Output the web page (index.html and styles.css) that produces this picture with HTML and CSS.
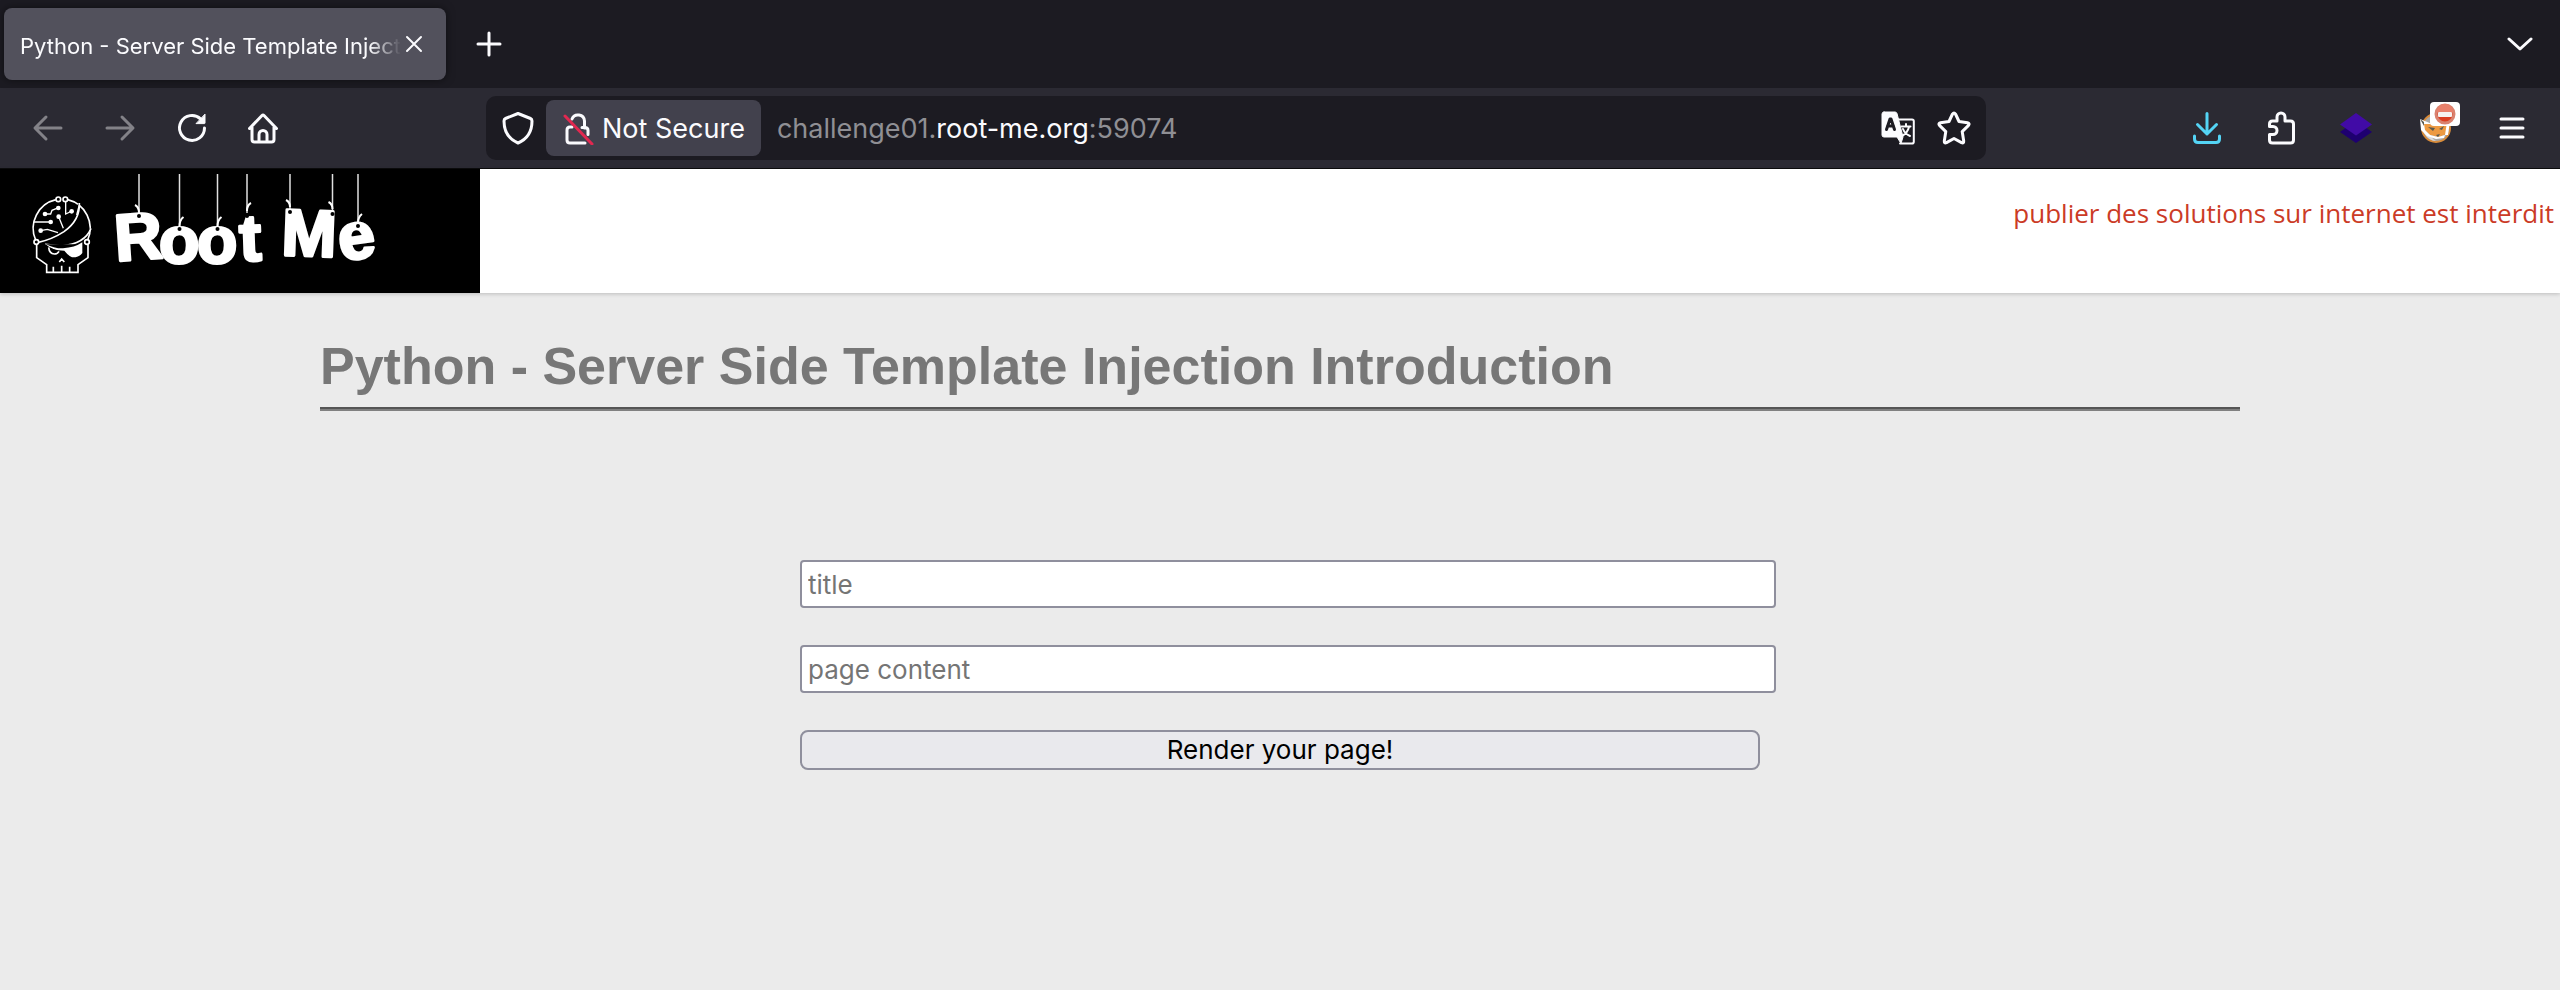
FILE: index.html
```html
<!DOCTYPE html>
<html lang="en">
<head>
<meta charset="utf-8">
<title>Python - Server Side Template Injection Introduction</title>
<link rel="stylesheet" href="styles.css">
</head>
<body>
<div class="tabstrip">
  <div class="tab">
    <span class="tab-label">Python - Server Side Template Injection Introduction</span>
    <button class="tab-close" aria-label="Close tab"><svg width="18" height="18" viewBox="0 0 18 18"><path d="M2 2l14 14M16 2L2 16"/></svg></button>
  </div>
  <button class="icon-button new-tab" aria-label="New tab"><svg width="26" height="26" viewBox="0 0 26 26"><path d="M13 2v22M2 13h22"/></svg></button>
  <button class="icon-button all-tabs" aria-label="List all tabs"><svg width="26" height="16" viewBox="0 0 26 16"><path d="M2 3l11 10L24 3"/></svg></button>
</div>

<div class="toolbar">
  <nav class="nav-buttons" aria-label="Navigation">
    <button class="icon-button" aria-label="Back" disabled><svg width="32" height="32" viewBox="0 0 32 32"><path d="M29 16H4M14 5L3 16l11 11"/></svg></button>
    <button class="icon-button" aria-label="Forward" disabled><svg width="32" height="32" viewBox="0 0 32 32"><path d="M3 16h25M18 5l11 11-11 11"/></svg></button>
    <button class="icon-button" aria-label="Reload"><svg width="32" height="32" viewBox="0 0 32 32"><path d="M28.500 16a12.500 12.500 0 1 1-4-9.200"/><path class="solid" d="M29 2.500v8.500a.6.6 0 0 1-.6.600h-8z"/></svg></button>
    <button class="icon-button" aria-label="Home"><svg width="32" height="32" viewBox="0 0 32 32"><path d="M1.500 16.500L14 3.500q1-1 2 0l12.500 13M4 15v12.500q0 2.500 2.500 2.500h17q2.500 0 2.500-2.500V15M11 30V22.500a4 4 0 0 1 8 0V30"/></svg></button>
  </nav>

  <div class="urlbar">
    <button class="shield" aria-label="Tracking protection"><svg width="32" height="34" viewBox="0 0 32 34"><path d="M16 2.500L28.500 7.500q1.500.6 1.500 2.500Q30 26 16 32 2 26 2 10q0-1.900 1.500-2.500z"/></svg></button>
    <button class="identity">
      <svg width="32" height="34" viewBox="0 0 32 34"><path d="M10 8a6.500 6.500 0 0 1 12.500 2v7M10 16h-2q-3 0-3 3v10q0 3 3 3h15M20 16.500h3q3 0 3 3v4"/><path class="slash" d="M3 5l27 28"/></svg>
      <span>Not Secure</span>
    </button>
    <div class="address" role="textbox" contenteditable="true" spellcheck="false" aria-label="Address">challenge01.<span class="domain">root-me.org</span>:59074</div>
    <button class="page-action" aria-label="Translate page"><svg width="34" height="34" viewBox="0 0 34 34"><path class="solid" d="M3 1h11q1.500 0 2 1.500L22 26l-2 6.500L16 26H3q-2 0-2-2V3q0-2 2-2z"/><path class="thin" d="M17 8.500h14q1.800 0 1.800 1.800v20.400q0 1.800-1.800 1.800H19"/><path class="letter" d="M5.500 18.500L9 8h1l3.500 10.500M6.500 15h6"/><path class="glyph" d="M20.500 15.500h9M25 13v2.500M28 16q-1.500 6-7 9M22 18q2 5 7 7"/></svg></button>
    <button class="page-action" aria-label="Bookmark this page"><svg width="34" height="34" viewBox="0 0 34 34"><path d="M15.500 3q1.500-2.200 3 0l3.500 7.500 8.500 1.200q2.600.6 1 2.700l-6.300 6.200 1.500 9.400q.2 2.600-2.200 1.600L17 27.500l-7.500 4.100q-2.400 1-2.200-1.600l1.500-9.400-6.300-6.200q-1.600-2.100 1-2.700l8.500-1.200z"/></svg></button>
  </div>

  <div class="extensions">
    <button class="icon-button" aria-label="Downloads"><svg class="download" width="32" height="34" viewBox="0 0 32 34"><path d="M17 2.500V23M7.500 13.500L17 23l9.500-9.500M4.500 25v3q0 3.500 3.500 3.500h18q3.500 0 3.500-3.500v-3"/></svg></button>
    <button class="icon-button" aria-label="Extensions"><svg width="32" height="34" viewBox="0 0 32 34"><path d="M4.500 15.500V13q0-3 3-3H12V6a4 4 0 0 1 8 0v4h5.500q3 0 3 3v16q0 3-3 3h-18q-3 0-3-3v-5.500H8a4 4 0 0 0 0-8z"/></svg></button>
    <button class="icon-button" aria-label="Layers extension"><svg width="34" height="34" viewBox="0 0 34 34"><path class="layer-back" d="M17 9.500L33 21 17 32 1 21z"/><path class="layer-front" d="M17 2l16 11.500L17 24.500 1 13.500z"/></svg></button>
    <button class="icon-button proxy" aria-label="FoxyProxy, disabled">
      <svg class="fox" width="34" height="34" viewBox="0 0 34 34"><circle cx="17" cy="17" r="14" fill="#a9a9a9" stroke="#d98c3b" stroke-width="2"/><path d="M5 22q5 8 12 8-5-3-6-7z" fill="#dcdcdc"/><path d="M3 11l11 3 9-3 7-1-2 13-8 3-9-2-5-5z" fill="#ed9a42"/><path d="M1 8l12 5-8 0 1 6 5 5 8 2 7-2-1 3-8 1-9-3-6-6zM28 11l3-1-2 14-3 0z" fill="#fff"/><path d="M1 8l4 3 0 4zM9 16l7 1-2 3zM20 18l5-3-2 4zM17 24l4-1-2 3z" fill="#5c5a50"/></svg>
      <svg class="badge" width="30" height="24" viewBox="0 0 30 24"><rect width="30" height="24" rx="4" fill="#fff"/><circle cx="15" cy="12" r="9" fill="#da3d21" stroke="#d9826f"/><path d="M7 10a8 8 0 0 1 16 0z" fill="#e9806b"/><rect x="8" y="10" width="14" height="5" rx="1" fill="#f6f1ef"/></svg>
    </button>
    <button class="icon-button menu" aria-label="Open application menu"><svg width="26" height="22" viewBox="0 0 26 22"><path d="M2 2h22M2 11h22M2 20h22"/></svg></button>
  </div>
</div>

<header class="site-header">
  <a class="logo" href="#" aria-label="Root Me">
    <svg width="480" height="124" viewBox="0 0 480 124">
      <g class="skull" transform="translate(20 -4) scale(.3333)">
        <path d="M108 104A88 88 0 0 0 47 225M143 104a88 88 0 0 1 60 121"/>
        <path d="M178 114Q181 165 132 200 95 224 55 232M213 190Q195 236 125 243 98 240 75 238"/>
        <path d="M50 238v40l30 21v23h94v-23l30-21v-40M100 322v-17M125 322v-20M149 322v-17M118 291l7-9 8 9"/>
        <path class="trace" d="M74 147h18l4-11 18-7M42 171h48M62 197l20-4 32 10M116 155l14 35M137 110v37l19-9M178 120l-8 30"/>
        <circle cx="115" cy="103" r="7"/><circle cx="136" cy="103" r="7"/><circle cx="49" cy="231" r="7"/><circle cx="201" cy="231" r="7"/>
        <g class="node"><circle cx="75" cy="147" r="7"/><circle cx="115" cy="129" r="7"/><circle cx="92" cy="171" r="7"/><circle cx="62" cy="197" r="7"/><circle cx="116" cy="155" r="7"/><circle cx="155" cy="139" r="7"/></g>
        <path class="node" d="M75 236q30 15 54 14 35-2 58-18v32q-10 14-31 13-12-6-23-20-20 0-32-4-12-5-26-17z"/>
        <path d="M86 247q2 19 17 20 10 0 14-8"/>
      </g>
      <g class="strings">
        <path d="M139 5v41M179.500 5v52M217.500 5v52M247 5v39M290 5v36M332.500 5v38M358 5v52"/>
        <path class="knot" d="M139 44q0-6-4-8M179.500 57q0-6 4-9M217.500 57q0-6 4-9M247 42q0-6 4-8M290 38q0-5-4-7M332.500 40q0-5-4-7M358 54q0-6 4-9"/>
      </g>
      <g class="letters">
        <text x="116" y="92" transform="rotate(-4 116 92)">R</text>
        <text x="159" y="94">o</text>
        <text x="197" y="94">o</text>
        <text x="240" y="92" transform="rotate(-2 240 92)">t</text>
        <text x="281" y="86" transform="rotate(2 281 86)">M</text>
        <text x="341" y="92" transform="rotate(-8 341 92)">e</text>
      </g>
      <g class="holes"><circle cx="139" cy="47" r="2"/><circle cx="179.500" cy="60" r="2"/><circle cx="217.500" cy="60" r="2"/><circle cx="247" cy="47" r="2"/><circle cx="290" cy="43" r="2"/><circle cx="332.500" cy="45" r="2"/><circle cx="358" cy="57" r="2"/></g>
    </svg>
  </a>
  <p class="notice">publier des solutions sur internet est interdit</p>
</header>

<main class="content">
  <h1>Python - Server Side Template Injection Introduction</h1>
  <hr>
  <form class="page-form">
    <input type="text" name="title" placeholder="title" aria-label="title">
    <input type="text" name="content" placeholder="page content" aria-label="page content">
    <button type="submit">Render your page!</button>
  </form>
</main>
</body>
</html>
```
FILE: styles.css
```css
body {
  margin: 0;
  min-height: 100vh;
  background: #ebebeb;
  font-family: Inter, "Liberation Sans", sans-serif;
}

button {
  font-family: inherit;
  cursor: pointer;
}

/* Browser chrome */
.tabstrip,
.toolbar {
  display: flex;
  align-items: center;
  box-sizing: border-box;
  color: #fbfbfe;
}

.tabstrip svg,
.toolbar svg {
  display: block;
  flex: none;
  fill: none;
  stroke: currentColor;
  stroke-width: 3;
  stroke-linecap: round;
  stroke-linejoin: round;
}

.tabstrip {
  height: 88px;
  padding: 0 20px 0 4px;
  background: #1c1b22;
}

.tab {
  display: flex;
  align-items: center;
  box-sizing: border-box;
  width: 442px;
  height: 72px;
  padding: 0 16px;
  border-radius: 8px;
  background: #52515c;
  box-shadow: 0 0 8px rgba(0, 0, 0, 0.5);
}

.tab-label {
  flex: 1;
  overflow: hidden;
  padding-top: 3px;
  white-space: nowrap;
  font-size: 22px;
  line-height: 32px;
  -webkit-mask-image: linear-gradient(to left, transparent, #000 32px);
  mask-image: linear-gradient(to left, transparent, #000 32px);
}

.tab-close {
  padding: 0 7px 0 4px;
  border: 0;
  background: none;
  color: inherit;
}

.tabstrip .tab-close svg {
  stroke-width: 2;
}

.icon-button {
  display: flex;
  align-items: center;
  justify-content: center;
  width: 64px;
  height: 64px;
  padding: 0;
  border: 0;
  border-radius: 8px;
  background: none;
  color: inherit;
}

.icon-button:disabled {
  color: #838288;
}

.new-tab {
  margin-left: 11px;
}

.all-tabs {
  width: 40px;
  margin-left: auto;
}

.toolbar {
  height: 81px;
  padding: 0 20px 0 16px;
  border-bottom: 1px solid #0c0c0d;
  background: #2b2a33;
}

.nav-buttons {
  display: flex;
  gap: 8px;
}

.urlbar {
  display: flex;
  flex: 1;
  align-items: center;
  height: 64px;
  margin: 0 188px 0 190px;
  border-radius: 10px;
  background: #1c1b22;
  font-size: 27px;
}

.urlbar button {
  display: flex;
  align-items: center;
  padding: 0;
  border: 0;
  background: none;
  color: inherit;
  font-size: inherit;
}

.urlbar .shield {
  padding: 0 12px 0 16px;
}

.urlbar .identity {
  gap: 8px;
  height: 56px;
  padding: 0 16px;
  border-radius: 8px;
  background: #42414d;
}

.toolbar .slash {
  stroke: #e22850;
}

.address {
  flex: 1;
  margin-left: 16px;
  outline: 0;
  color: #8f8f94;
}

.domain {
  color: #fbfbfe;
}

.urlbar .page-action {
  margin-right: 22px;
}

.urlbar .page-action:last-child {
  margin-right: 15px;
}

.toolbar .solid {
  fill: currentColor;
  stroke-width: 1;
}

.toolbar .thin,
.toolbar .glyph {
  stroke-width: 2;
}

.toolbar .letter {
  stroke: #1c1b22;
}

.extensions {
  display: flex;
  gap: 11px;
}

.download {
  color: #54d4f5;
}

.toolbar .layer-back {
  fill: #1e0070;
  stroke: none;
}

.toolbar .layer-front {
  fill: #410ba6;
  stroke: none;
}

.proxy {
  position: relative;
  width: 74px;
}

.toolbar .fox,
.toolbar .badge {
  stroke: none;
}

.badge {
  position: absolute;
  top: 6px;
  right: 13px;
}

.menu {
  width: 56px;
}

/* Site header */
.site-header {
  display: flex;
  justify-content: space-between;
  align-items: flex-start;
  background: #fff;
  box-shadow: 0 1px 4px rgba(0, 0, 0, 0.2);
}

.logo {
  display: block;
  background: #000;
}

.logo svg {
  display: block;
}

.skull {
  fill: #000;
  stroke: #fff;
  stroke-width: 5;
}

.skull .trace {
  fill: none;
  stroke-width: 4;
}

.skull .node {
  fill: #fff;
  stroke: none;
}

.strings {
  fill: none;
  stroke: #e0e0e0;
  stroke-width: 1.5;
}

.knot {
  stroke: #fff;
  stroke-width: 2;
}

.letters {
  fill: #fff;
  stroke: #fff;
  stroke-width: 3;
  stroke-linejoin: round;
  font-family: "Liberation Sans", sans-serif;
  font-size: 66px;
  font-weight: 700;
}

.holes {
  fill: #000;
}

.notice {
  margin: 26px 6px 0 0;
  color: #cb3b26;
  font-family: "Open Sans", sans-serif;
  font-size: 26px;
  line-height: 36px;
}

/* Page content */
.content {
  width: 75%;
  margin: 0 auto;
}

h1 {
  margin: 0;
  padding-top: 43px;
  color: #777;
  font-family: "Liberation Sans", sans-serif;
  font-size: 52px;
  line-height: 60px;
}

hr {
  margin: 11px 0 0;
  border: 2px solid;
  border-color: #555 #808080 #808080 #555;
  border-width: 2px 0;
}

.page-form {
  display: flex;
  flex-direction: column;
  width: 50%;
  margin: 149px auto 0;
}

.page-form input {
  box-sizing: border-box;
  width: calc(100% + 16px);
  height: 48px;
  margin: 0 0 37px;
  padding: 2px 6px;
  border: 2px solid #8f8f9d;
  border-radius: 4px;
  background: #fff;
  font-family: inherit;
  font-size: 26px;
}

.page-form input::placeholder {
  color: #757575;
}

.page-form button {
  height: 40px;
  padding: 0 8px;
  border: 2px solid #8f8f9d;
  border-radius: 8px;
  background: #e9e9ed;
  color: #000;
  font-size: 26px;
  line-height: 32px;
}
```
